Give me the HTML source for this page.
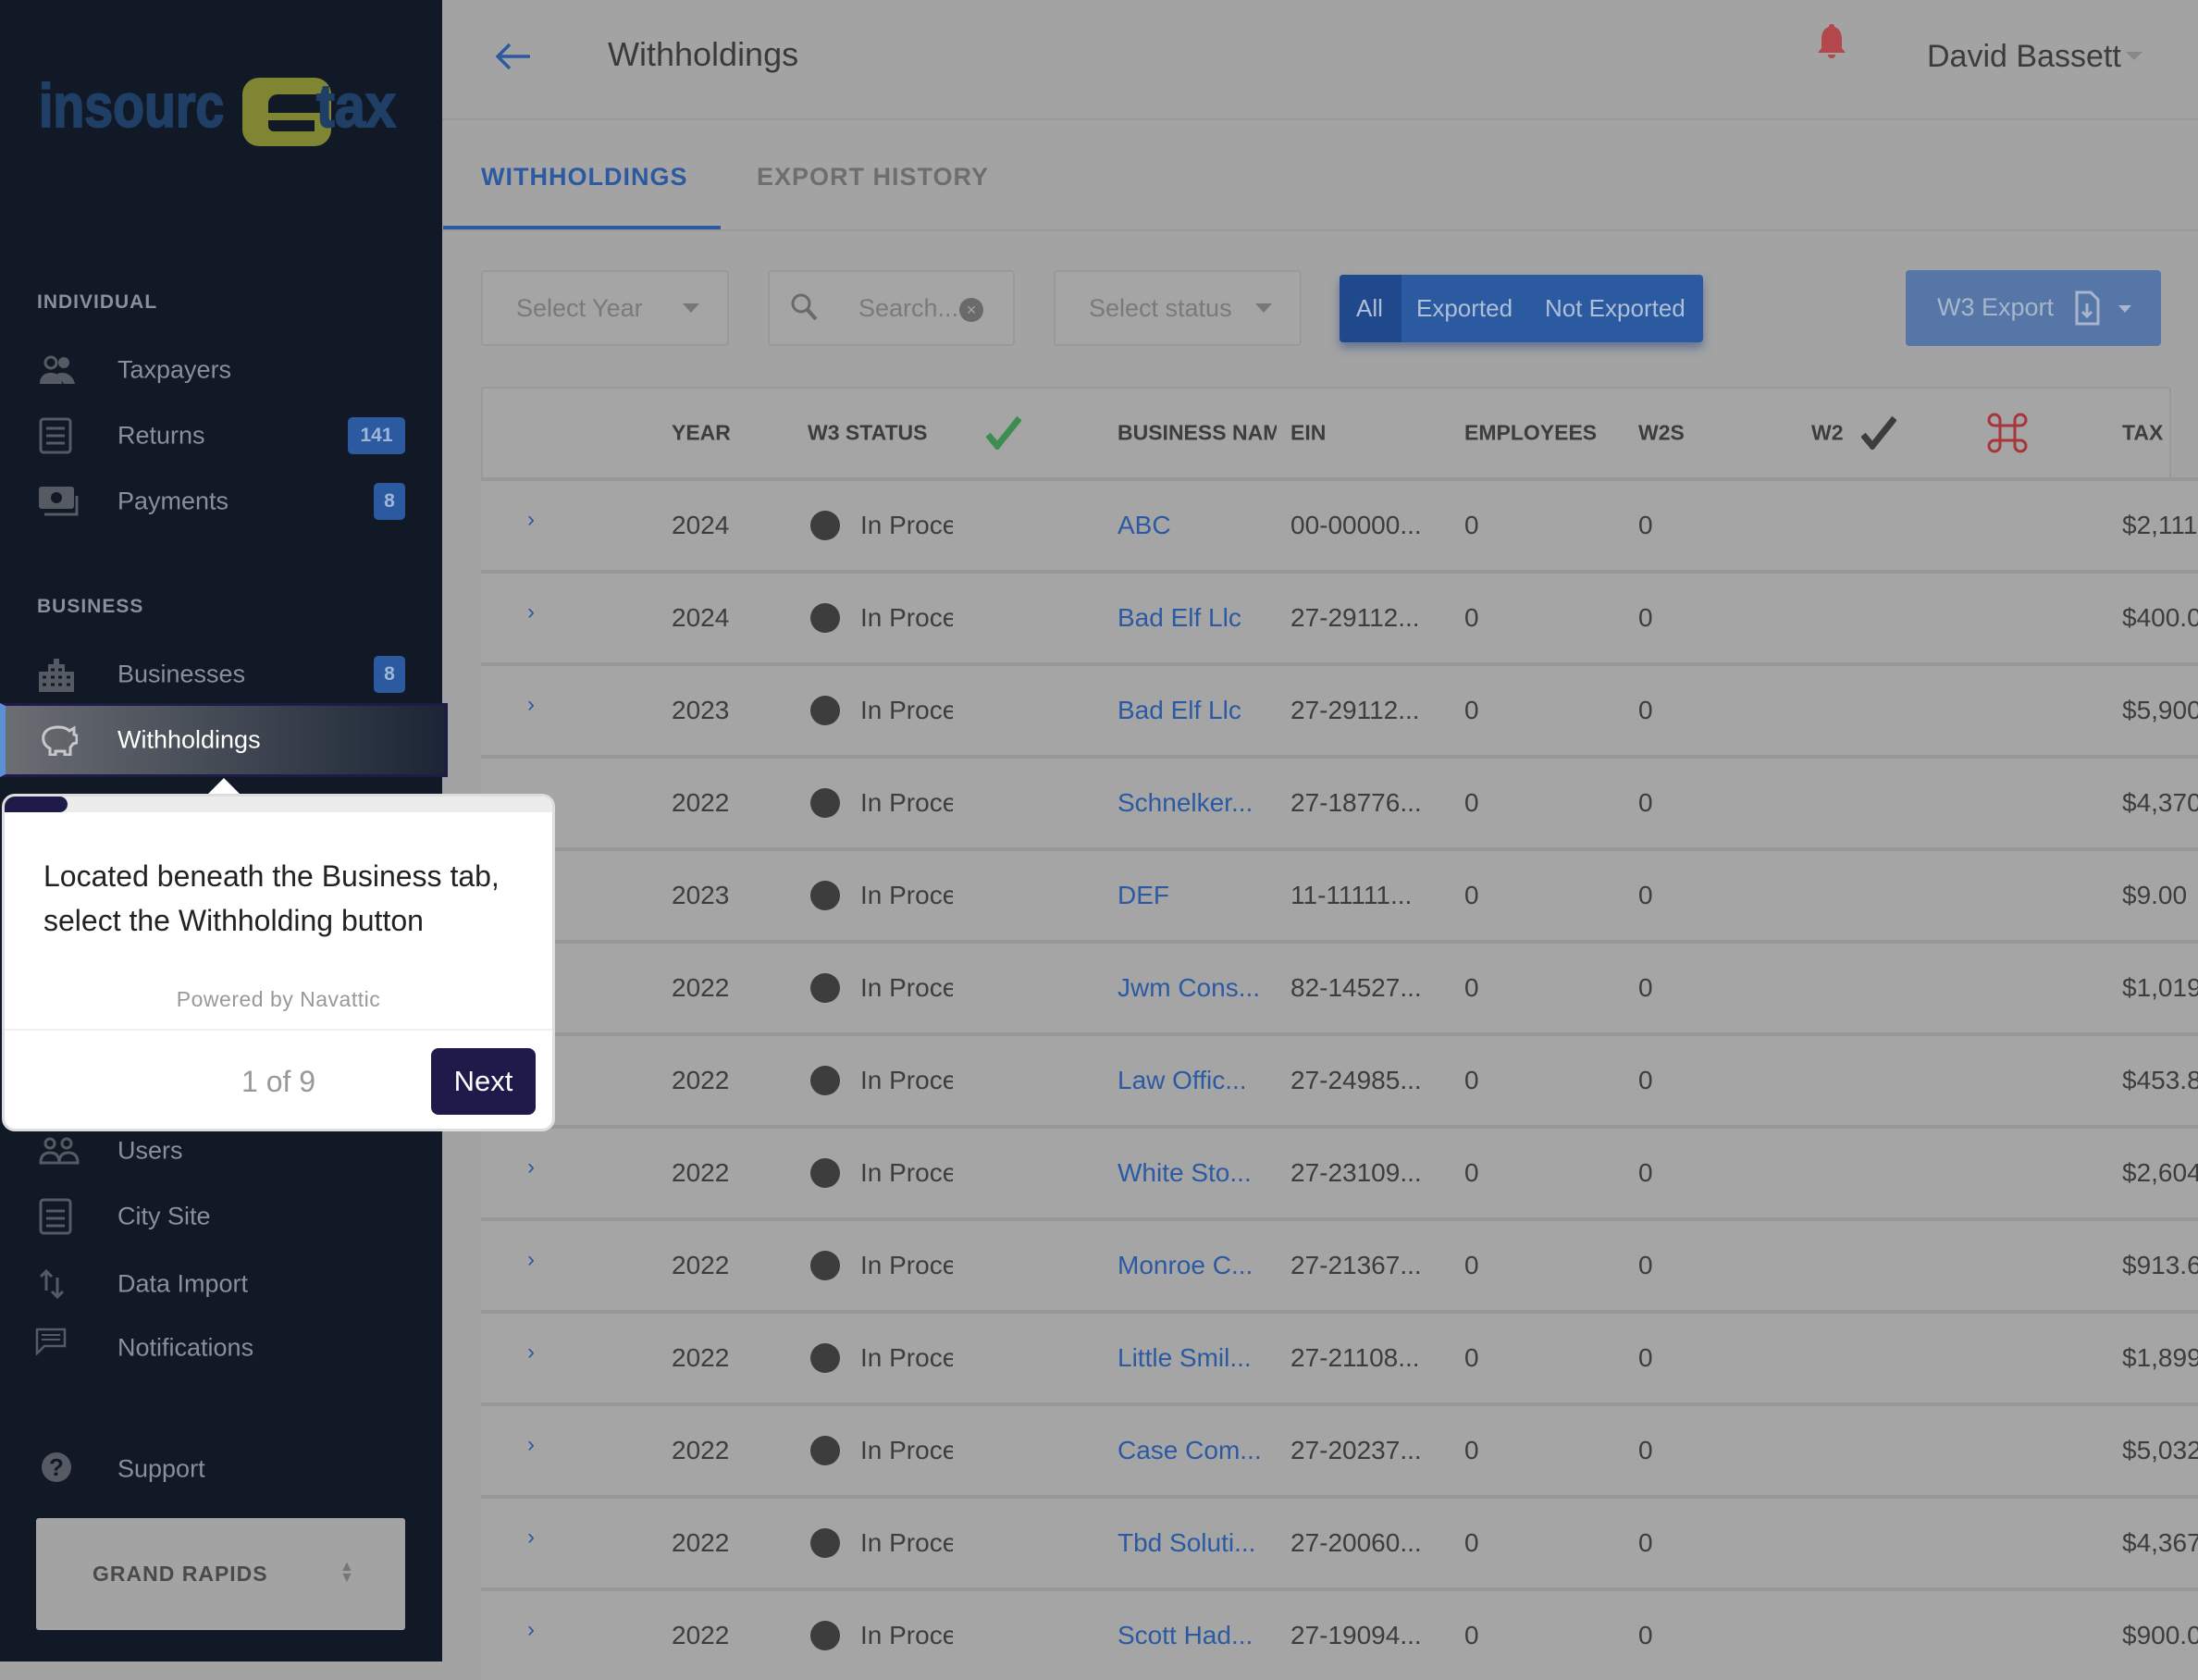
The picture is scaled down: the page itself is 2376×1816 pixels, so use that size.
<!DOCTYPE html>
<html><head><meta charset="utf-8"><style>
*{box-sizing:border-box;margin:0;padding:0}
body{width:2376px;height:1796px;overflow:hidden;background:#a3a3a3;font-family:"Liberation Sans",sans-serif;position:relative}
.a{position:absolute;white-space:nowrap}
.sb{position:absolute;left:0;top:0;width:478px;height:1796px;background:#111826}
.nav{position:absolute;left:127px;font-size:27px;color:#8a8f99;transform:translateY(-50%);white-space:nowrap}
.sec{position:absolute;left:40px;font-size:21px;font-weight:bold;color:#8a8f99;letter-spacing:1px;transform:translateY(-50%)}
.badge{position:absolute;background:#2c5aa0;color:#9fb6d8;font-weight:bold;font-size:21px;border-radius:5px;height:40px;line-height:40px;text-align:center;transform:translateY(-50%)}
.ic{position:absolute;left:42px;transform:translateY(-50%)}
.box{position:absolute;border:2px solid #999;border-radius:4px;background:#a5a5a5;color:#7a7a7a;font-size:27px}
.th{position:absolute;top:468px;font-size:23px;font-weight:bold;color:#3d3d3d;transform:translateY(-50%);white-space:nowrap}
.row{position:absolute;left:520px;width:1856px;height:100px;border-top:4px solid #979797;background:#a5a5a5}
.c{position:absolute;top:50%;transform:translateY(-50%);font-size:28px;color:#3d3d3d;white-space:nowrap}
.l{color:#2b5aa3}
.logo{position:absolute;top:76px;font-size:66px;font-weight:bold;color:#1f3f66;transform-origin:left top;white-space:nowrap;-webkit-text-stroke:2px #1f3f66}
</style></head><body>
<div class="sb">
 <div class="logo" style="left:42px;transform:scaleX(0.84)">insourc</div>
 <div class="a" style="left:262px;top:84px;width:96px;height:74px;background:#7f8532;border-radius:18px"></div>
 <div class="a" style="left:290px;top:102px;width:64px;height:20px;background:#111826;border-radius:10px 10px 0 0"></div>
 <div class="a" style="left:290px;top:130px;width:50px;height:12px;background:#111826;border-radius:0 0 0 6px"></div>
 <div class="logo" style="left:342px;transform:scaleX(0.9)">tax</div>
 <div class="sec" style="top:327px">INDIVIDUAL</div>
 <svg class="ic" style="top:400px" width="40" height="34" viewBox="0 0 40 34"><circle cx="13" cy="9" r="6" fill="none" stroke="#555a63" stroke-width="3"/><circle cx="27" cy="9" r="6" fill="#555a63"/><path d="M1 32c0-9 6-12 12-12s12 3 12 12zM20 21c4-2 16-2 19 11h-12" fill="#555a63"/></svg>
 <div class="nav" style="top:400px">Taxpayers</div>
 <svg class="ic" style="top:471px" width="36" height="40" viewBox="0 0 36 40"><rect x="2" y="2" width="32" height="36" rx="3" fill="none" stroke="#555a63" stroke-width="3"/><path d="M8 12h20M8 20h20M8 28h20" stroke="#555a63" stroke-width="3"/></svg>
 <div class="nav" style="top:471px">Returns</div><div class="badge" style="left:376px;top:471px;width:62px">141</div>
 <svg class="ic" style="top:542px" width="44" height="36" viewBox="0 0 44 36"><rect x="0" y="2" width="38" height="24" rx="3" fill="#555a63"/><circle cx="19" cy="14" r="6" fill="#111826"/><path d="M41 12v20H6" fill="none" stroke="#555a63" stroke-width="3"/></svg>
 <div class="nav" style="top:542px">Payments</div><div class="badge" style="left:404px;top:542px;width:34px">8</div>
 <div class="sec" style="top:656px">BUSINESS</div>
 <svg class="ic" style="top:729px" width="38" height="38" viewBox="0 0 38 38"><path d="M0 38V16h10V8h6V2h6v6h6v8h10v22z" fill="#555a63"/><path d="M4 22h4M4 30h4M13 14h4M21 14h4M13 22h4M21 22h4M30 22h4M30 30h4M13 30h4M21 30h4" stroke="#111826" stroke-width="3"/></svg>
 <div class="nav" style="top:729px">Businesses</div><div class="badge" style="left:404px;top:729px;width:34px">8</div>
 <div class="a" style="left:0;top:760px;width:484px;height:80px;background:linear-gradient(90deg,#6b6e73,#1b2535);border:3px solid #1e1b45;border-left:6px solid #5b8fd6"></div>
 <svg class="ic" style="top:800px" width="42" height="34" viewBox="0 0 42 34"><path d="M5 12c2-6 8-9 16-9 5 0 9 1 12 4l5-3v7l3 1v8l-4 1-3 4v8h-6v-4h-10v4h-6v-7c-6-3-8-8-7-14z" fill="none" stroke="#c6c8cb" stroke-width="3"/></svg>
 <div class="nav" style="top:800px;color:#fff">Withholdings</div>
 <svg class="ic" style="top:1244px" width="44" height="30" viewBox="0 0 44 30"><circle cx="12" cy="7" r="5" fill="none" stroke="#555a63" stroke-width="3"/><circle cx="30" cy="7" r="5" fill="none" stroke="#555a63" stroke-width="3"/><path d="M2 28c0-8 4-11 10-11s10 3 10 11zM22 28c0-8 4-11 10-11s10 3 10 11z" fill="none" stroke="#555a63" stroke-width="3"/></svg>
 <div class="nav" style="top:1244px">Users</div>
 <svg class="ic" style="top:1315px" width="36" height="40" viewBox="0 0 36 40"><rect x="2" y="2" width="32" height="36" rx="3" fill="none" stroke="#555a63" stroke-width="3"/><path d="M8 14h20M8 22h20M8 30h20" stroke="#555a63" stroke-width="3"/></svg>
 <div class="nav" style="top:1315px">City Site</div>
 <svg class="ic" style="top:1388px" width="30" height="34" viewBox="0 0 30 34"><path d="M8 24V3M2 9l6-6 6 6M20 10v21M14 25l6 6 6-6" fill="none" stroke="#555a63" stroke-width="3"/></svg>
 <div class="nav" style="top:1388px">Data Import</div>
 <svg class="ic" style="top:1450px;left:38px" width="34" height="30" viewBox="0 0 34 30"><path d="M2 2h30v18H10l-8 8z" fill="none" stroke="#555a63" stroke-width="2.5"/><path d="M7 8h20M7 13h20" stroke="#555a63" stroke-width="2"/></svg>
 <div class="nav" style="top:1457px">Notifications</div>
 <div class="ic" style="top:1586px;left:45px;width:32px;height:32px;border-radius:50%;background:#555a63;color:#111826;font-weight:bold;font-size:26px;text-align:center;line-height:32px">?</div>
 <div class="nav" style="top:1588px">Support</div>
 <div class="a" style="left:39px;top:1641px;width:399px;height:121px;background:#a3a3a3;border-radius:3px"></div>
 <div class="a" style="left:100px;top:1688px;font-size:23px;font-weight:bold;color:#4a4a4a;letter-spacing:1px">GRAND RAPIDS</div>
 <div class="a" style="left:367px;top:1688px;font-size:16px;color:#777;line-height:12px">▲<br>▼</div>
</div>
<!-- header -->
<svg class="a" style="left:535px;top:45px" width="40" height="32" viewBox="0 0 40 32"><path d="M38 16H4M16 3L3 16l13 13" fill="none" stroke="#2c5aa0" stroke-width="3.5"/></svg>
<div class="a" style="left:657px;top:38px;font-size:36px;color:#3a3a3a">Withholdings</div>
<svg class="a" style="left:1963px;top:24px" width="34" height="40" viewBox="0 0 34 40"><path d="M17 2c2 0 3 1 3 3 6 2 8 7 8 14v9l4 5H2l4-5v-9c0-7 2-12 8-14 0-2 1-3 3-3z" fill="#b4474c"/><path d="M13 35h8c0 3-2 4-4 4s-4-1-4-4z" fill="#b4474c"/></svg>
<div class="a" style="left:2083px;top:42px;font-size:34px;color:#3c3c3c">David Bassett</div>
<div class="a" style="left:2298px;top:56px;border:9px solid transparent;border-top:9px solid #888"></div>
<div class="a" style="left:478px;top:128px;width:1898px;height:2px;background:#999"></div>
<div class="a" style="left:520px;top:176px;font-size:27px;font-weight:bold;color:#2c5aa0;letter-spacing:1px">WITHHOLDINGS</div>
<div class="a" style="left:818px;top:176px;font-size:27px;font-weight:bold;color:#6e6e6e;letter-spacing:1px">EXPORT HISTORY</div>
<div class="a" style="left:478px;top:248px;width:1898px;height:2px;background:#999"></div>
<div class="a" style="left:479px;top:244px;width:300px;height:4px;background:#2c5aa0"></div>
<!-- filters -->
<div class="box" style="left:520px;top:292px;width:268px;height:82px"><span class="a" style="left:36px;top:24px">Select Year</span><span class="a" style="left:216px;top:34px;border:9px solid transparent;border-top:10px solid #777"></span></div>
<div class="box" style="left:830px;top:292px;width:267px;height:82px"><svg class="a" style="left:22px;top:22px" width="30" height="32" viewBox="0 0 30 32"><circle cx="12" cy="12" r="9" fill="none" stroke="#6a6a6a" stroke-width="3"/><path d="M19 19l9 10" stroke="#6a6a6a" stroke-width="4"/></svg><span class="a" style="left:96px;top:24px">Search...</span><span class="a" style="left:205px;top:28px;width:26px;height:26px;border-radius:50%;background:#6a6a6a;color:#a5a5a5;font-size:18px;text-align:center;line-height:26px">×</span></div>
<div class="box" style="left:1139px;top:292px;width:268px;height:82px"><span class="a" style="left:36px;top:24px">Select status</span><span class="a" style="left:216px;top:34px;border:9px solid transparent;border-top:10px solid #777"></span></div>
<div class="a" style="left:1448px;top:297px;width:393px;height:73px;background:#2c5aa0;border-radius:4px;box-shadow:0 6px 10px rgba(40,70,130,.5)"></div>
<div class="a" style="left:1448px;top:297px;width:67px;height:73px;background:#1f488d;border-radius:4px 0 0 4px"></div>
<div class="a" style="left:1466px;top:318px;font-size:26px;color:#aebfd8">All</div>
<div class="a" style="left:1531px;top:318px;font-size:26px;color:#aebfd8">Exported</div>
<div class="a" style="left:1670px;top:318px;font-size:26px;color:#aebfd8">Not Exported</div>
<div class="a" style="left:2060px;top:292px;width:276px;height:82px;background:#5576a6;border-radius:4px"></div>
<div class="a" style="left:2094px;top:317px;font-size:27px;color:#a7b6cc">W3 Export</div>
<svg class="a" style="left:2242px;top:314px" width="28" height="38" viewBox="0 0 28 38"><path d="M3 2h15l8 8v26H3z" fill="none" stroke="#a7b6cc" stroke-width="3"/><path d="M14 14v14M9 23l5 5 5-5" fill="none" stroke="#a7b6cc" stroke-width="3"/></svg>
<div class="a" style="left:2290px;top:330px;border:7px solid transparent;border-top:8px solid #a7b6cc"></div>
<!-- table header -->
<div class="a" style="left:520px;top:418px;width:1827px;height:100px;background:#a5a5a5;border:2px solid #999;border-bottom:none;border-radius:4px 4px 0 0"></div>
<div class="th" style="left:726px">YEAR</div>
<div class="th" style="left:873px">W3 STATUS</div>
<svg class="a" style="left:1066px;top:450px" width="38" height="36" viewBox="0 0 38 36"><path d="M2 20l10 12L36 2" fill="none" stroke="#3e8d50" stroke-width="7"/></svg>
<div class="th" style="left:1208px;width:172px;overflow:hidden">BUSINESS NAME</div>
<div class="th" style="left:1395px">EIN</div>
<div class="th" style="left:1583px">EMPLOYEES</div>
<div class="th" style="left:1771px">W2S</div>
<div class="th" style="left:1958px">W2</div>
<svg class="a" style="left:2012px;top:450px" width="38" height="36" viewBox="0 0 38 36"><path d="M2 20l10 12L36 2" fill="none" stroke="#3d3d3d" stroke-width="7"/></svg>
<svg class="a" style="left:2148px;top:446px" width="44" height="44" viewBox="0 0 44 44"><path d="M14 14h16v16H14zM14 14V8a6 6 0 1 0-6 6zM30 14V8a6 6 0 1 1 6 6zM14 30v6a6 6 0 1 1-6-6zM30 30v6a6 6 0 1 0 6-6z" fill="none" stroke="#a6353c" stroke-width="3"/></svg>
<div class="th" style="left:2294px">TAX</div>
<!-- rows -->
<div id="rows"></div>
<script>
var d=[["2024","ABC","00-00000...","$2,111"],["2024","Bad Elf Llc","27-29112...","$400.0"],["2023","Bad Elf Llc","27-29112...","$5,900"],["2022","Schnelker...","27-18776...","$4,370"],["2023","DEF","11-11111...","$9.00"],["2022","Jwm Cons...","82-14527...","$1,019"],["2022","Law Offic...","27-24985...","$453.8"],["2022","White Sto...","27-23109...","$2,604"],["2022","Monroe C...","27-21367...","$913.6"],["2022","Little Smil...","27-21108...","$1,899"],["2022","Case Com...","27-20237...","$5,032"],["2022","Tbd Soluti...","27-20060...","$4,367"],["2022","Scott Had...","27-19094...","$900.0"]];
var h="";d.forEach(function(r,i){var t=516+i*100;h+='<div class="row" style="top:'+t+'px"><span class="c l" style="left:50px;font-size:24px;top:44%">›</span><span class="c" style="left:206px">'+r[0]+'</span><span class="c" style="left:356px;width:32px;height:32px;border-radius:50%;background:#3d3d3d"></span><span class="c" style="left:410px;width:100px;overflow:hidden">In Process</span><span class="c l" style="left:688px">'+r[1]+'</span><span class="c" style="left:875px">'+r[2]+'</span><span class="c" style="left:1063px">0</span><span class="c" style="left:1251px">0</span><span class="c" style="left:1774px">'+r[3]+'</span></div>'});document.getElementById("rows").innerHTML=h;
</script>
<!-- tooltip -->
<div class="a" style="left:230px;top:846px;width:24px;height:24px;background:#fff;transform:rotate(45deg)"></div>
<div class="a" style="left:2px;top:858px;width:598px;height:365px;background:#fff;border:3px solid #ddd;border-radius:14px;overflow:hidden">
 <div class="a" style="left:0;top:0;width:598px;height:17px;background:#ececec"></div>
 <div class="a" style="left:0;top:0;width:68px;height:17px;background:#1e1b4b;border-radius:0 9px 9px 0"></div>
 <div class="a" style="left:42px;top:62px;font-size:32px;line-height:48px;color:#222">Located beneath the Business tab,<br>select the Withholding button</div>
 <div class="a" style="left:0;width:592px;text-align:center;top:206px;font-size:23px;color:#999;letter-spacing:.5px">Powered by Navattic</div>
 <div class="a" style="left:0;top:251px;width:598px;height:2px;background:#f0f0f0"></div>
 <div class="a" style="left:256px;top:290px;font-size:32px;color:#999">1 of 9</div>
 <div class="a" style="left:461px;top:272px;width:113px;height:72px;background:#1e1b4b;border-radius:8px;color:#fff;font-size:31px;text-align:center;line-height:72px">Next</div>
</div>
</body></html>
